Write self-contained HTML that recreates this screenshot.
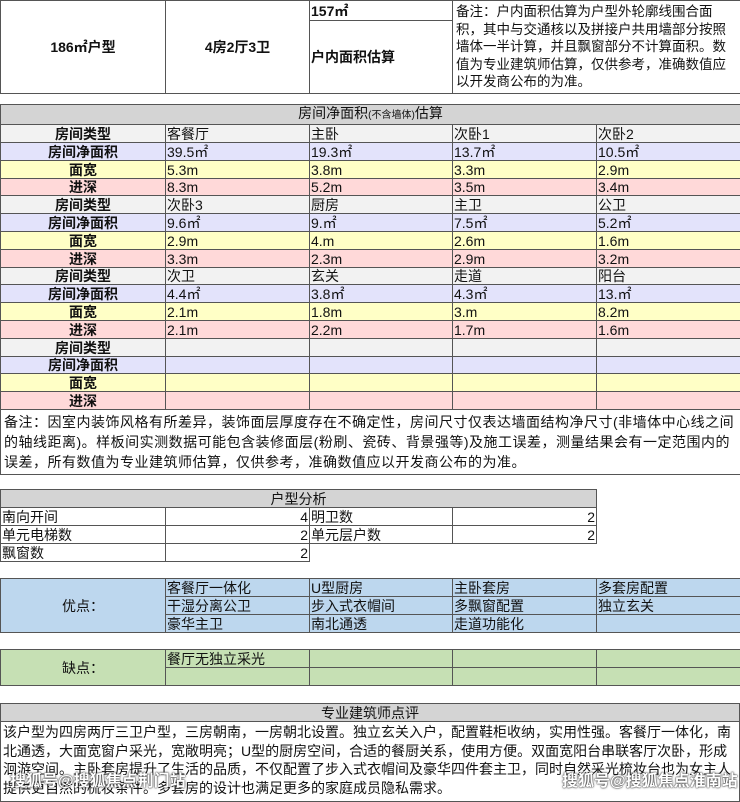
<!DOCTYPE html>
<html><head><meta charset="utf-8"><style>
*{margin:0;padding:0;box-sizing:border-box}
body{width:740px;height:794px;background:#fff;position:relative;overflow:hidden;font-family:"Liberation Sans","Noto Sans CJK SC",sans-serif;font-size:14px;color:#111}
table{position:absolute;left:0;border-collapse:collapse;table-layout:fixed}
td{border:1px solid #555;padding:0 1px;line-height:16px;white-space:nowrap;overflow:hidden;vertical-align:middle}
.c{text-align:center}.b{font-weight:bold}.r{text-align:right}
.g{background:#d4d4d4}.t{background:#f2f2f2}.p{background:#e3e3fb}.y{background:#ffffc6}.k{background:#ffd9d9}
.bl{background:#bdd7ee}.gr{background:#c6e0b4}
.a td{height:18px}.s td{height:17px}
.wm{position:absolute;color:#fff;font-size:16px;font-weight:bold;white-space:nowrap;text-shadow:0 0 2px #333,0 0 1px #000}
</style></head><body>
<table style="top:0;width:740px">
<colgroup><col style="width:165px"><col style="width:144px"><col style="width:143px"><col style="width:144px"><col style="width:144px"></colgroup>
<tr style="height:19px"><td rowspan="2" class="c b">186㎡户型</td><td rowspan="2" class="c b">4房2厅3卫</td><td class="b">157㎡</td><td colspan="2" rowspan="2" style="white-space:normal;vertical-align:top;line-height:17.5px;padding:2px 3px;font-size:13.5px">备注：户内面积估算为户型外轮廓线围合面积，其中与交通核以及拼接户共用墙部分按照墙体一半计算，并且飘窗部分不计算面积。数值为专业建筑师估算，仅供参考，准确数值应以开发商公布的为准。</td></tr>
<tr style="height:67px"><td class="b">户内面积估算</td></tr>
</table>
<table style="top:104px;width:740px">
<colgroup><col style="width:165px"><col style="width:144px"><col style="width:143px"><col style="width:144px"><col style="width:144px"></colgroup>
<tr class="a"><td colspan="5" class="c g">房间净面积<span style="font-size:10px">(不含墙体)</span>估算</td></tr>
<tr class="a t"><td class="c b">房间类型</td><td>客餐厅</td><td>主卧</td><td>次卧1</td><td>次卧2</td></tr>
<tr class="a p"><td class="c b">房间净面积</td><td>39.5㎡</td><td>19.3㎡</td><td>13.7㎡</td><td>10.5㎡</td></tr>
<tr class="a y"><td class="c b">面宽</td><td>5.3m</td><td>3.8m</td><td>3.3m</td><td>2.9m</td></tr>
<tr class="s k"><td class="c b">进深</td><td>8.3m</td><td>5.2m</td><td>3.5m</td><td>3.4m</td></tr>
<tr class="a t"><td class="c b">房间类型</td><td>次卧3</td><td>厨房</td><td>主卫</td><td>公卫</td></tr>
<tr class="a p"><td class="c b">房间净面积</td><td>9.6㎡</td><td>9.㎡</td><td>7.5㎡</td><td>5.2㎡</td></tr>
<tr class="a y"><td class="c b">面宽</td><td>2.9m</td><td>4.m</td><td>2.6m</td><td>1.6m</td></tr>
<tr class="a k"><td class="c b">进深</td><td>3.3m</td><td>2.3m</td><td>2.9m</td><td>3.2m</td></tr>
<tr class="s t"><td class="c b">房间类型</td><td>次卫</td><td>玄关</td><td>走道</td><td>阳台</td></tr>
<tr class="a p"><td class="c b">房间净面积</td><td>4.4㎡</td><td>3.8㎡</td><td>4.3㎡</td><td>13.㎡</td></tr>
<tr class="a y"><td class="c b">面宽</td><td>2.1m</td><td>1.8m</td><td>3.m</td><td>8.2m</td></tr>
<tr class="a k"><td class="c b">进深</td><td>2.1m</td><td>2.2m</td><td>1.7m</td><td>1.6m</td></tr>
<tr class="a t"><td class="c b">房间类型</td><td></td><td></td><td></td><td></td></tr>
<tr class="s p"><td class="c b">房间净面积</td><td></td><td></td><td></td><td></td></tr>
<tr class="a y"><td class="c b">面宽</td><td></td><td></td><td></td><td></td></tr>
<tr class="a k"><td class="c b">进深</td><td></td><td></td><td></td><td></td></tr>
<tr style="height:64px"><td colspan="5" style="white-space:normal;line-height:20px;padding:2px 3px;letter-spacing:0.5px">备注：因室内装饰风格有所差异，装饰面层厚度存在不确定性，房间尺寸仅表达墙面结构净尺寸(非墙体中心线之间的轴线距离)。样板间实测数据可能包含装修面层(粉刷、瓷砖、背景强等)及施工误差，测量结果会有一定范围内的误差，所有数值为专业建筑师估算，仅供参考，准确数值应以开发商公布的为准。</td></tr>
</table>
<table style="top:489px;width:596px">
<colgroup><col style="width:165px"><col style="width:144px"><col style="width:143px"><col style="width:144px"></colgroup>
<tr style="height:18px"><td colspan="4" class="c g">户型分析</td></tr>
<tr style="height:18px"><td>南向开间</td><td class="r">4</td><td>明卫数</td><td class="r">2</td></tr>
<tr style="height:18px"><td>单元电梯数</td><td class="r">2</td><td>单元层户数</td><td class="r">2</td></tr>
<tr style="height:18px"><td>飘窗数</td><td class="r">2</td><td style="border:none"></td><td style="border:none"></td></tr>
</table>
<table style="top:578px;width:740px" class="bl">
<colgroup><col style="width:165px"><col style="width:144px"><col style="width:143px"><col style="width:144px"><col style="width:144px"></colgroup>
<tr style="height:18px"><td rowspan="3" class="c">优点：</td><td>客餐厅一体化</td><td>U型厨房</td><td>主卧套房</td><td>多套房配置</td></tr>
<tr style="height:18px"><td>干湿分离公卫</td><td>步入式衣帽间</td><td>多飘窗配置</td><td>独立玄关</td></tr>
<tr style="height:18px"><td>豪华主卫</td><td>南北通透</td><td>走道功能化</td><td></td></tr>
</table>
<table style="top:649px;width:740px" class="gr">
<colgroup><col style="width:165px"><col style="width:144px"><col style="width:143px"><col style="width:144px"><col style="width:144px"></colgroup>
<tr style="height:18px"><td rowspan="2" class="c">缺点：</td><td>餐厅无独立采光</td><td></td><td></td><td></td></tr>
<tr style="height:18px"><td></td><td></td><td></td><td></td></tr>
</table>
<table style="top:703px;width:740px">
<tr style="height:18px"><td class="c g">专业建筑师点评</td></tr>
<tr style="height:80px"><td style="white-space:normal;line-height:18.5px;vertical-align:top;padding:1px 2px">该户型为四房两厅三卫户型，三房朝南，一房朝北设置。独立玄关入户，配置鞋柜收纳，实用性强。客餐厅一体化，南北通透，大面宽窗户采光，宽敞明亮；U型的厨房空间，合适的餐厨关系，使用方便。双面宽阳台串联客厅次卧，形成洄游空间。主卧套房提升了生活的品质，不仅配置了步入式衣帽间及豪华四件套主卫，同时自然采光梳妆台也为女主人提供更自然的梳妆条件。多套房的设计也满足更多的家庭成员隐私需求。</td></tr>
</table>
<div class="wm" style="left:10px;top:767px">搜狐号@搜狐焦点荆门站</div>
<div class="wm" style="left:562px;top:767px">搜狐号@搜狐焦点淮南站</div>
</body></html>
